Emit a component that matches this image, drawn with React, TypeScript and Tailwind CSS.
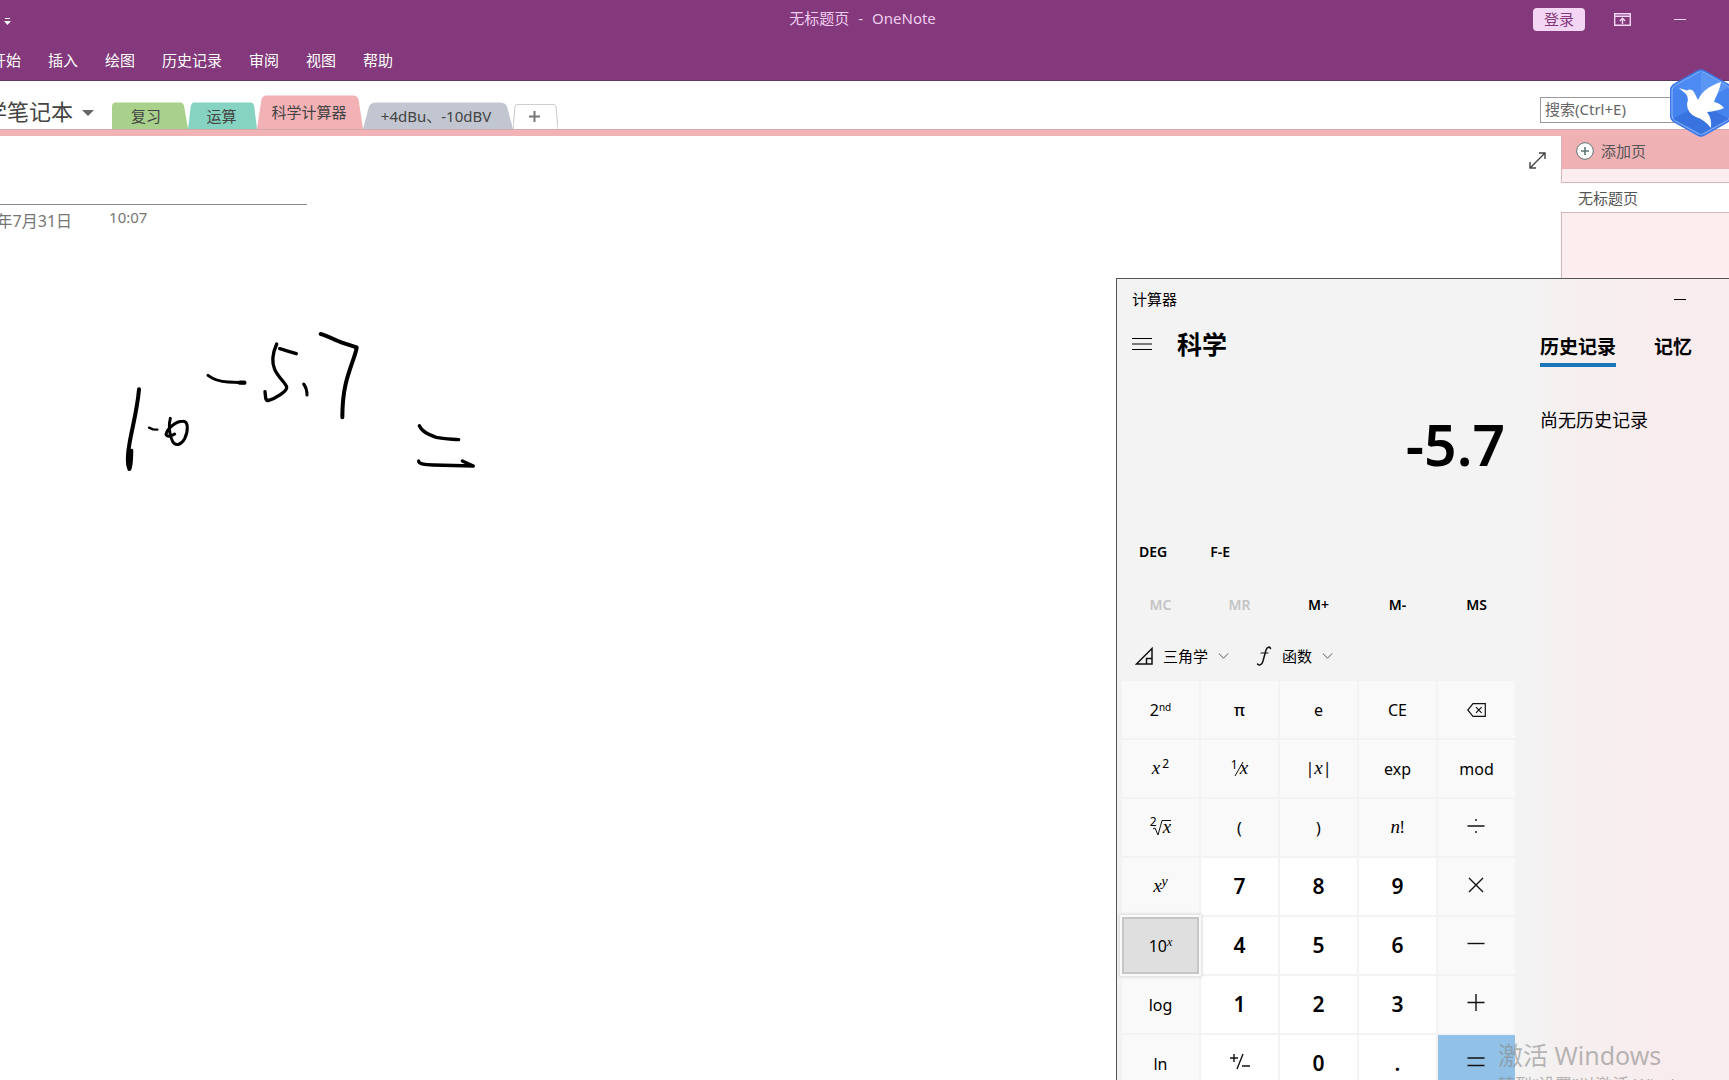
import type { ReactNode } from 'react';

const menuItems = ['开始', '插入', '绘图', '历史记录', '审阅', '视图', '帮助'];

type SectionTab = { label: string; size: string; fill: string; first?: boolean };

const sectionTabs: SectionTab[] = [
  { label: '复习', size: 'w-[76px] h-[27px] pr-[8px]', fill: '#a9d18b', first: true },
  { label: '运算', size: 'w-[69px] h-[27px] pr-[2px]', fill: '#86d3c2' },
  { label: '科学计算器', size: 'w-[106px] h-[34px] pr-[2px]', fill: '#f1b1b5' },
  { label: '+4dBu、-10dBV', size: 'w-[150px] h-[27px] pr-[4px]', fill: '#c1c6d0' },
];

function TabShape({ fill, stroke, first }: { fill: string; stroke?: string; first?: boolean }) {
  return (
    <svg className="absolute inset-0 h-full w-full" viewBox="0 0 100 30" preserveAspectRatio="none" aria-hidden="true">
      <path
        d={
          first
            ? 'M0 30 V5 Q0 0.5 5 0.5 H90 Q94 0.5 95 5 L100 30'
            : 'M0 30 L4 5 Q5 0.5 9 0.5 H91 Q95 0.5 96 5 L100 30'
        }
        fill={fill}
        stroke={stroke ?? 'none'}
        vectorEffect="non-scaling-stroke"
      />
    </svg>
  );
}

function TitleBar() {
  return (
    <header className="h-[81px] shrink-0 border-b border-[#5f3a63] bg-[#83397b] text-[15px] text-white">
      <div className="relative flex h-[38px] items-center justify-between">
        <button aria-label="自定义快速访问工具栏" className="ml-[4px] mt-[6px]">
          <svg width="7" height="8" viewBox="0 0 7 8" fill="#fff">
            <path d="M1 0h5v1H1zM0 3h7L3.5 7z" />
          </svg>
        </button>
        <h1 className="absolute inset-x-0 flex justify-center gap-[9px] pr-[4px] pb-[2px] text-[#f0cdf0]">
          <span>无标题页</span>
          <span>-</span>
          <span>OneNote</span>
        </h1>
        <div className="relative flex items-center pr-[43px]">
          <button className="h-[23px] w-[52px] rounded-sm bg-[#f3d6f4] leading-[22px] text-[#83397b]">登录</button>
          <button aria-label="功能区显示选项" className="ml-[29px]">
            <svg width="17" height="13" viewBox="0 0 17 13" fill="none" stroke="#f3d6f4" strokeWidth="1.4">
              <path d="M.7.7h15.6v11.6H.7zM.7 3.2h15.6M8.500 11V5.500M5.800 8l2.700-2.700L11.200 8" />
            </svg>
          </button>
          <button aria-label="最小化" className="ml-[43px] flex h-5 items-center">
            <span className="h-px w-[12px] bg-[#f3d6f4]" />
          </button>
        </div>
      </div>
      <nav className="-ml-[9px] flex h-[44px] items-center gap-[27px]">
        {menuItems.map((m) => (
          <button key={m} className="leading-6">
            {m}
          </button>
        ))}
      </nav>
    </header>
  );
}

function SectionBar() {
  return (
    <div className="flex h-[48px] shrink-0 items-end justify-between bg-white">
      <div className="flex items-end">
        <button className="-ml-[15px] mb-[2px] flex w-[127px] items-center gap-[9px] text-[22px] leading-8 whitespace-nowrap text-[#444]">
          学笔记本
          <svg width="12" height="6" viewBox="0 0 12 6" fill="#666" className="mt-1">
            <path d="M0 0h12L6 6z" />
          </svg>
        </button>
        {sectionTabs.map((t) => (
          <button key={t.label} className={`relative flex items-center justify-center ${t.size}`}>
            <TabShape fill={t.fill} first={t.first} />
            <span className="relative text-[15px] leading-5 whitespace-nowrap text-[#444]">{t.label}</span>
          </button>
        ))}
        <button aria-label="新建分区" className="relative flex h-[25px] w-[45px] items-center justify-center pr-[2px]">
          <TabShape fill="#fff" stroke="#c8c8c8" />
          <svg className="relative" width="11" height="11" viewBox="0 0 11 11" stroke="#777" strokeWidth="2">
            <path d="M5.500 0v11M0 5.500h11" />
          </svg>
        </button>
      </div>
      <input
        aria-label="搜索"
        placeholder="搜索(Ctrl+E)"
        className="mr-[29px] mb-[6px] h-[26px] w-[160px] border border-[#999] bg-white px-1 pb-[2px] text-[15px] text-[#555] outline-none placeholder:text-[#666]"
      />
    </div>
  );
}

function BirdBadge() {
  return (
    <svg className="absolute top-[68px] -right-[4px]" width="64" height="70" viewBox="0 0 64 70" aria-label="飞鸟">
      <path d="M28 2.500Q32 0 36 2.500L59 15.500Q63 18 63 22V48Q63 52 59 54.500L36 67.500Q32 70 28 67.500L5 54.500Q1 52 1 48V22Q1 18 5 15.500Z" fill="#3d78e6" />
      <path d="M29 4.500Q32 3 35 4.500L58 17.500Q61 19.500 61 23V47Q61 50.500 58 52.500L35 65.500Q32 67 29 65.500L6 52.500Q3 50.500 3 47V23Q3 19.500 6 17.500Z" fill="#4583ee" stroke="#82b0f8" strokeWidth="1.200" />
      <path d="M32 4L60 19L32 35Z" fill="#5b96f5" />
      <path d="M4 19L32 4V35Z" fill="#4d8af1" />
      <path d="M4 51L32 35L60 51L32 66Z" fill="#3973df" />
      <path d="M10 20L18 22.500Q22 20 25 24L29 32Q34 20 52 14Q50 24 46 31L45 34Q51 35 55 40Q48 43 38 44Q43 50 42 60Q36 52 27 49Q18 45 18 36Q20 30 17 26Z" fill="#fff" />
    </svg>
  );
}

function Handwriting() {
  return (
    <svg
      className="mt-[76px] ml-[80px]"
      width="420"
      height="190"
      viewBox="0 0 1260 570"
      fill="none"
      stroke="#000"
      strokeWidth="12"
      strokeLinecap="round"
      strokeLinejoin="round"
      role="img"
      aria-label="手写：10 的 -5.7 次方等于"
    >
      <path d="M177 241C172 300 158 350 149 400C142 438 140 462 148 480C154 468 153 445 154 425" />
      <path d="M207 356L219 361L232 362" strokeWidth="7" />
      <path d="M271 328C266 345 266 375 278 398C289 414 304 406 314 389C325 366 326 336 308 337C288 337 262 357 258 376C262 386 276 380 284 375" strokeWidth="9" />
      <path d="M384 199C402 213 421 218 444 219L494 221" strokeWidth="9" />
      <path d="M480 221H493" strokeWidth="13" />
      <path d="M590 105C579 130 575 160 584 181C595 206 615 219 620 234C622 246 589 268 564 275C555 274 557 262 555 248" strokeWidth="10" />
      <path d="M599 119C615 124 632 128 649 134" strokeWidth="10" />
      <path d="M671 225C679 236 681 246 681 258" strokeWidth="9" />
      <path d="M722 75C742 80 763 93 786 101L830 115C829 133 808 178 797 225C788 264 787 296 787 325" />
      <path d="M1018 350C1026 369 1045 377 1069 385C1092 390 1113 390 1136 392" strokeWidth="10" />
      <path d="M1016 456C1016 466 1037 467 1060 468L1180 471L1147 456" strokeWidth="10" />
    </svg>
  );
}

function NotePage() {
  return (
    <main className="flex min-h-0 grow bg-white">
      <section className="relative min-w-0 grow">
        <div className="h-[69px] w-[307px] border-b border-[#888]" />
        <div className="flex gap-[37px] text-[#767676]">
          <span className="-ml-[40px] pt-[4px] text-[16px] leading-6">2020年7月31日</span>
          <span className="text-[15px] leading-6">10:07</span>
        </div>
        <Handwriting />
        <button aria-label="全屏" className="absolute top-[16px] right-[15px]">
          <svg width="17" height="17" viewBox="0 0 17 17" fill="none" stroke="#444" strokeWidth="1.400">
            <path d="M1 16L16 1M10 1h6v6M1 10v6h6" />
          </svg>
        </button>
      </section>
      <aside className="flex w-[168px] shrink-0 flex-col border-l border-[#dcb4b7] bg-[#fceeef] text-[15px] text-[#555]">
        <button className="flex h-[33px] items-center gap-[7px] bg-[#f0b1b4] pb-[4px] pl-[14px] leading-6">
          <svg width="18" height="18" viewBox="0 0 18 18" fill="#fff" stroke="#5f7777">
            <circle cx="9" cy="9" r="8.300" />
            <path d="M9 5v8M5 9h8" strokeWidth="1.600" />
          </svg>
          添加页
        </button>
        <button className="mt-[13px] -ml-px h-[31px] border-y border-[#dcb4b7] bg-white pl-[17px] text-left leading-[28px]">无标题页</button>
      </aside>
    </main>
  );
}

const X = ({ children }: { children: ReactNode }) => (
  <i className="font-['Liberation_Serif',serif] text-[19px]">{children}</i>
);

function Op({ d }: { d: string }) {
  return (
    <svg className="mr-px mb-[3px]" width="18" height="18" viewBox="0 0 18 18" fill="none" stroke="#111" strokeWidth="1.400">
      <path d={d} />
    </svg>
  );
}

type Key = { name: string; face: ReactNode; kind?: 'digit' | 'equals' | 'hover' };

const digit = (n: string): Key => ({ name: n, face: n, kind: 'digit' });

const keys: Key[] = [
  { name: '第二功能', face: <span>2<sup className="text-[10px]">nd</sup></span> },
  { name: 'π', face: <span className="font-medium">π</span> },
  { name: 'e', face: 'e' },
  { name: 'CE', face: 'CE' },
  {
    name: '退格',
    face: (
      <svg width="19" height="14" viewBox="0 0 19 14" fill="none" stroke="#111" strokeWidth="1.200">
        <path d="M6 .7h12.300v12.600H6L.8 7zM9 4.200l5.600 5.600M14.600 4.200L9 9.800" />
      </svg>
    ),
  },
  { name: 'x 平方', face: <span><X>x</X><sup className="ml-0.5 text-[12px]">2</sup></span> },
  {
    name: '倒数',
    face: (
      <span className="flex items-center">
        <span className="-mt-2 text-[12px]">1</span>
        <svg className="-mx-1" width="10" height="16" viewBox="0 0 10 16" stroke="#111"><path d="M9 1L1 15" /></svg>
        <X>x</X>
      </span>
    ),
  },
  { name: '绝对值', face: <span>|<X>x</X>|</span> },
  { name: 'exp', face: 'exp' },
  { name: 'mod', face: 'mod' },
  {
    name: '平方根',
    face: (
      <span className="flex items-center">
        <span className="-mt-3 text-[12px]">2</span>
        <svg className="-ml-1" width="10" height="16" viewBox="0 0 10 16" fill="none" stroke="#111"><path d="M0 9l2-1 3 7L9 .5h1" /></svg>
        <span className="h-4 border-t border-[#111] leading-[12px]"><X>x</X></span>
      </span>
    ),
  },
  { name: '左括号', face: '(' },
  { name: '右括号', face: ')' },
  { name: '阶乘', face: <span><X>n</X>!</span> },
  { name: '除', face: <Op d="M0.500 9h17M9 2v2M9 14v2" /> },
  { name: 'x 的 y 次方', face: <span><X>x</X><sup><i className="font-['Liberation_Serif',serif] text-[14px]">y</i></sup></span> },
  digit('7'),
  digit('8'),
  digit('9'),
  { name: '乘', face: <Op d="M2 2l14 14M16 2L2 16" /> },
  { name: '10 的 x 次方', face: <span>10<sup><i className="font-['Liberation_Serif',serif] text-[12px]">x</i></sup></span>, kind: 'hover' },
  digit('4'),
  digit('5'),
  digit('6'),
  { name: '减', face: <Op d="M0.500 8.500h17" /> },
  { name: 'log', face: 'log' },
  digit('1'),
  digit('2'),
  digit('3'),
  { name: '加', face: <Op d="M0.500 8.500h17M9 0v17" /> },
  { name: 'ln', face: 'ln' },
  {
    name: '正负',
    kind: 'digit',
    face: (
      <svg className="mb-[3px]" width="20" height="18" viewBox="0 0 20 18" fill="none" stroke="#111" strokeWidth="1.400">
        <path d="M0 5h8M4 1v8M13 1L7 16M12 13h8" />
      </svg>
    ),
  },
  digit('0'),
  digit('.'),
  { name: '等于', face: <Op d="M0.500 5h17M0.500 12.500h17" />, kind: 'equals' },
];

const keyStyles = {
  plain: 'bg-[#f9f9f9] text-[16px]',
  digit: 'bg-white text-[21px] font-semibold',
  equals: 'bg-[#91c1e7]',
  hover: 'border-2 border-[#c6c6c6] bg-[#dfdfdf] text-[16px] shadow-[0_0_0_2px_#fafafa,0_0_3px_3px_#d8d8d8]',
};

function Chevron() {
  return (
    <svg width="11" height="6" viewBox="0 0 11 6" fill="none" stroke="#555">
      <path d="M.8.5l4.700 4.700L10.200.5" />
    </svg>
  );
}

function Calculator() {
  return (
    <section
      aria-label="计算器"
      className="absolute top-[278px] right-0 bottom-0 flex w-[613px] flex-col overflow-hidden border-t border-l border-[#555] bg-[linear-gradient(90deg,#f3f3f3_66%,#f6efef_75%,#f9ecee_90%)] text-black"
    >
      <div className="flex h-[40px] shrink-0 items-center justify-between pr-[43px] pl-[15px] text-[15px]">
        <span>计算器</span>
        <button aria-label="最小化" className="flex h-5 items-center">
          <span className="h-px w-[12px] bg-black" />
        </button>
      </div>
      <div className="flex">
        <div className="w-[403px] shrink-0 pr-[5px] pl-[5px]">
          <div className="flex h-[50px] items-center gap-[25px] pl-[10px]">
            <button aria-label="打开导航">
              <svg width="20" height="12" viewBox="0 0 20 12" stroke="#000">
                <path d="M0 .5h20M0 6h20M0 11.500h20" />
              </svg>
            </button>
            <h2 className="text-[25px] leading-8 font-bold">科学</h2>
          </div>
          <output className="block h-[154px] pt-[38px] pr-[10px] text-right text-[57px] leading-[74px] font-semibold">-5.7</output>
          <div className="flex h-[54px] items-center gap-[43px] pl-[17px] pt-[2px] text-[14px] font-semibold">
            <button>DEG</button>
            <button>F-E</button>
          </div>
          <div className="grid h-[54px] grid-cols-5 items-center gap-[2px] text-[14px] font-semibold">
            <button disabled className="text-[#c4c4c4]">MC</button>
            <button disabled className="text-[#c4c4c4]">MR</button>
            <button>M+</button>
            <button>M-</button>
            <button>MS</button>
          </div>
          <div className="flex h-[50px] items-center gap-[27px] pl-[13px] text-[15px]">
            <button className="flex items-center gap-[10px]">
              <svg width="18" height="18" viewBox="0 0 18 18" fill="none" stroke="#111" strokeWidth="1.500">
                <path d="M1.500 17L17 1.500V17zM11.500 17v-5.500H17" />
              </svg>
              三角学
              <Chevron />
            </button>
            <button className="flex items-center gap-[10px]">
              <svg width="16" height="20" viewBox="0 0 16 20" fill="none" stroke="#111" strokeLinecap="round">
                <path d="M14.500 2.500C14 .5 11.200.500 10 4L7 15C6 18.800 3.500 20 1.500 18" strokeWidth="1.500" />
                <path d="M5 7h7" strokeWidth="1.200" />
              </svg>
              函数
              <Chevron />
            </button>
          </div>
          <div className="grid grid-cols-5 gap-[2px]">
            {keys.map((k) => (
              <button
                key={k.name}
                aria-label={k.name}
                className={`flex h-[57px] items-center justify-center ${keyStyles[k.kind ?? 'plain']} ${k.kind === 'hover' ? 'relative' : ''}`}
              >
                {k.face}
              </button>
            ))}
          </div>
        </div>
        <div className="min-w-0 grow pl-[20px]">
          <div className="flex gap-[38px] pt-[12px] text-[19px] leading-8 font-bold">
            <button className="border-b-4 border-[#1a76b9]">历史记录</button>
            <button className="border-b-4 border-transparent">记忆</button>
          </div>
          <p className="pt-[37px] text-[18px] leading-8">尚无历史记录</p>
        </div>
      </div>
    </section>
  );
}

export default function App() {
  return (
    <div className="relative flex h-screen flex-col overflow-hidden bg-white font-['Noto_Sans','Noto_Sans_CJK_SC',sans-serif]">
      <TitleBar />
      <SectionBar />
      <div className="h-[7px] shrink-0 border-t border-[#d3a9ac] bg-[#f1b3b6]" />
      <NotePage />
      <Calculator />
      <BirdBadge />
      <div className="pointer-events-none absolute top-[1037px] right-0 w-[231px] whitespace-nowrap text-[#8a8a8a]/60">
        <p className="text-[25px] leading-9">激活 Windows</p>
        <p className="text-[17px] leading-6">转到“设置”以激活 Windows。</p>
      </div>
    </div>
  );
}
